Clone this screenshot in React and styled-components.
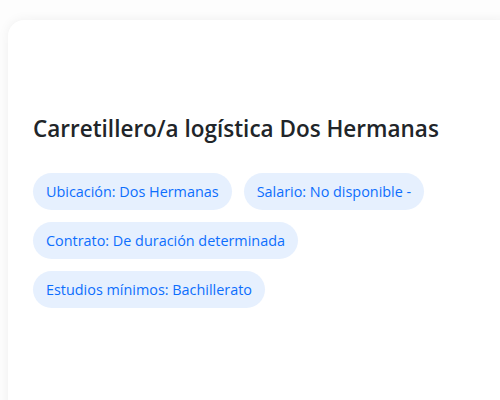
import React from "react";
import styled, { createGlobalStyle } from "styled-components";

const Global = createGlobalStyle`
  html, body { margin: 0; padding: 0; background: #fdfdfd; }
  body { font-family: "Open Sans", "Noto Sans", sans-serif; }
`;

const Page = styled.div`
  padding: 20px 0 0 8px;
  height: 380px;
  overflow: hidden;
`;

const Card = styled.div`
  background: #ffffff;
  border-radius: 16px;
  box-shadow: 0 0 12px rgba(0, 0, 0, 0.06);
  min-height: 420px;
  margin-right: -20px;
  padding: 95px 25px 0;
`;

const Title = styled.h1`
  margin: 0 0 31px;
  font-size: 22.5px;
  font-weight: 600;
  color: #212529;
  line-height: 27px;
`;

const Tags = styled.div`
  display: flex;
  flex-wrap: wrap;
  gap: 12px;
  max-width: 420px;
`;

const Tag = styled.span`
  display: inline-flex;
  align-items: center;
  height: 37px;
  padding: 0 13px;
  border-radius: 19px;
  background: #e6f0fe;
  color: #0d6efd;
  font-size: 14.4px;
  font-weight: 500;
  white-space: nowrap;
`;

const tags = [
  "Ubicación: Dos Hermanas",
  "Salario: No disponible -",
  "Contrato: De duración determinada",
  "Estudios mínimos: Bachillerato",
];

export default function App() {
  return (
    <>
      <Global />
      <Page>
        <Card>
          <Title>Carretillero/a logística Dos Hermanas</Title>
          <Tags>
            {tags.map((t) => (
              <Tag key={t}>{t}</Tag>
            ))}
          </Tags>
        </Card>
      </Page>
    </>
  );
}
